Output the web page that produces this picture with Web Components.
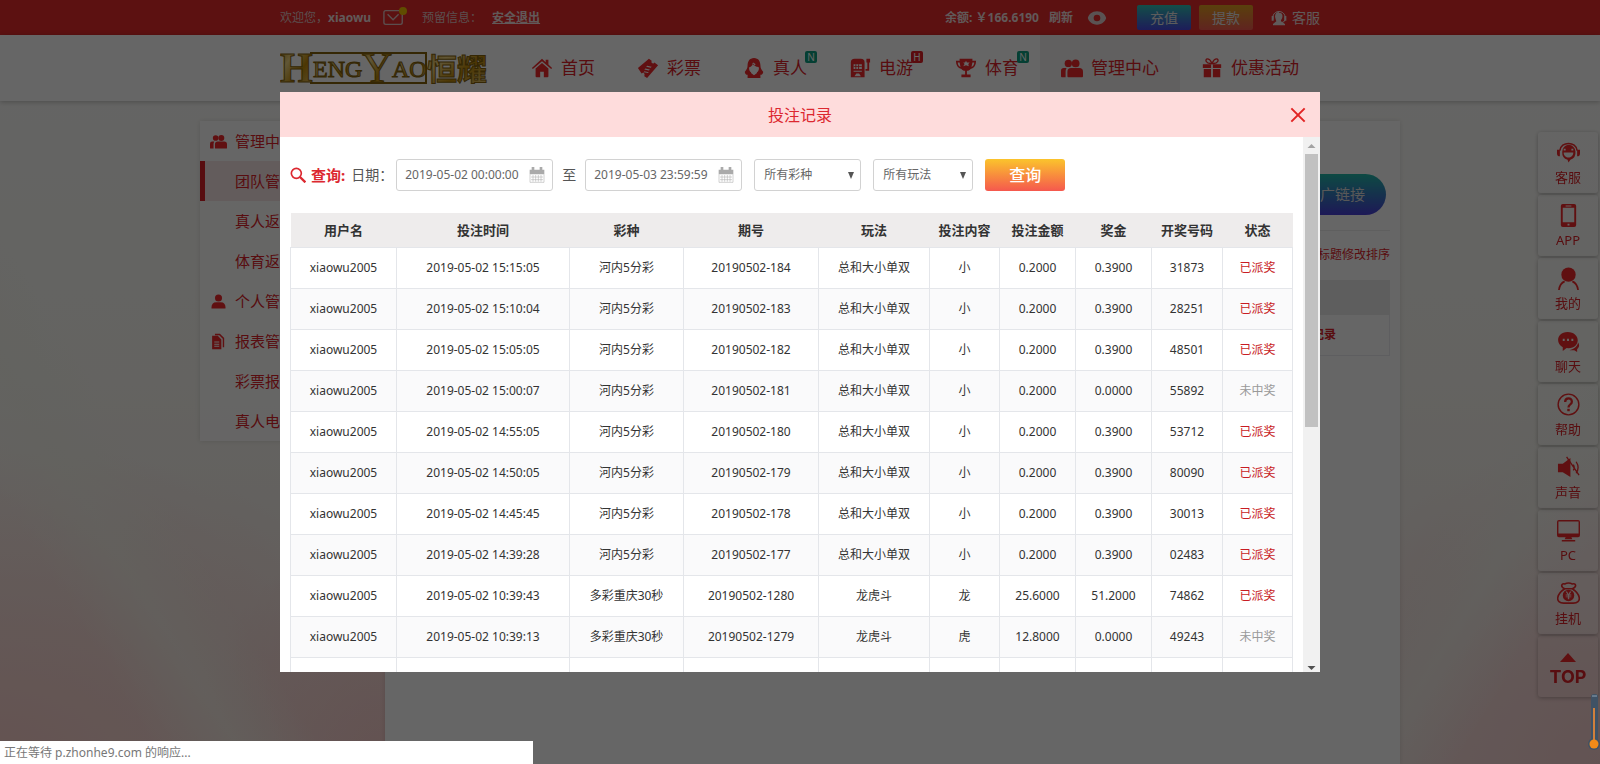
<!DOCTYPE html>
<html lang="zh-CN">
<head>
<meta charset="utf-8">
<title>投注记录</title>
<style>
    html, body {
        margin: 0;
        height: 100%;
        overflow: hidden;
    }

    body {
        --red: #dc2228;
        --icon-red: #f02a2c;
        font-family: "Noto Sans", "Noto Sans CJK SC", sans-serif;
        font-size: 12px;
        line-height: 20px;
        color: #333;
    }
</style>
</head>
<body>
<lottery-page></lottery-page>

<modal-layer>
    <record-dialog heading="投注记录">
        <record-filter></record-filter>
        <record-table></record-table>
    </record-dialog>
</modal-layer>

<status-bubble>正在等待 p.zhonhe9.com 的响应...</status-bubble>
<temp-gauge></temp-gauge>

<script>
const ICONS = {
    home: '<path d="M1 12 12 2l4 3.6V3h3v5.3L23 12l-1 1.2L12 4.500 2 13.200z"/><path d="M5 12.500 12 6.500l7 6V21q0 1-1 1h-4v-6h-4v6H6q-1 0-1-1z"/>',
    ticket: '<path fill-rule="evenodd" d="M1 12 13 2l3 2q-1 3 2 3l1-1 4 3-12 14-3-2q1-3-1-4l-2 1zM11 9.500l-1 1.200 5 1 1-1.200zm-2 3-1 1.200 5 1 1-1.200zm-1 3-.5 1 4.500 1 .8-1z"/>',
    girl: '<path fill-rule="evenodd" d="M12 1c5 0 7 4 7 8 0 3 1 5 3 7 0 3-2 4-5 3l-2-2c2-1 3-4 2-6-3 0-5-2-6-4-1 3-3 4-4 4-1 2 0 5 2 6l-2 2c-3 1-5 0-5-3 2-2 3-4 3-7 0-4 2-8 7-8m-1 5-1 2 2 1 2-1z"/><path d="m5 18 3-1 4 3 4-3 3 1v5H5z"/>',
    slot: '<path fill-rule="evenodd" d="M2 6q0-4 4-4h7q4 0 4 4v16H2zm3 2v5h9V8zm0 7v1h9v-1zm1 6h7l-2-3H8z"/><path d="M5 10h9v1H5zM7 8h1v5H7zm3 0h1v5h-1zM18 15v-2h2V6h-1V2h4v4h-1v9z"/>',
    cup: '<path fill-rule="evenodd" d="M5 2h14v2h4c0 5-2 8-6 9-1 1-2 2-4 2v4h4v3H7v-3h4v-4c-2 0-3-1-4-2-4-1-6-4-6-9h4zm-2 4c0 2 1 4 3 5L5 6zm18 0h-2l-1 5c2-1 3-3 3-5m-9-2-1 2H9l1.500 1.500L9 10l3-1 3 1-.5-2.500L16 6h-3z"/>',
    people: '<circle cx="8" cy="7" r="4"/><circle cx="16" cy="7" r="4.200"/><path d="M0 15q0-3 3-3h3q-1 2-1 4v6H1q-1 0-1-1zM7 16q0-4 4-4h9q4 0 4 4v5q0 1-1 1H8q-1 0-1-1z"/>',
    gift: '<path d="M2 8h9v4H2zm11 0h9v4h-9zM3 13h8v9H3zm10 0h8v9h-8z"/><path d="M12 7C5 8 4 2 7 2c3 0 4 3 5 5 1-2 2-5 5-5 3 0 2 6-5 5" fill="none" stroke="currentColor" stroke-width="1.500"/>',
    user: '<circle cx="12" cy="7" r="5"/><path d="M2 21q0-8 7-8h6q7 0 7 8 0 1-1 1H3q-1 0-1-1"/>',
    files: '<path fill-rule="evenodd" d="M7 1h7l6 6v13h-2V8l-5-5H7zM3 4h8l5 5v14H3zm3 8v1.500h7V12zm0 3v1.500h7V15zm0 3v1.500h7V18z"/>',
    mail: '<g fill="none" stroke="currentColor" stroke-width="1.500"><rect x="1" y="4" width="20" height="15" rx="2"/><path d="m5 8 6 6 6-6"/></g>',
    eye: '<path fill-rule="evenodd" d="M12 4c6 0 10 4 11 8-1 4-5 8-11 8S2 16 1 12c1-4 5-8 11-8m0 4a4 4 0 1 0 0 8 4 4 0 0 0 0-8"/>',
    agent: '<path fill="none" stroke="currentColor" stroke-width="1.500" d="M3 14V9c2-9 16-9 18 0v5q0 4-5 5"/><path d="M12 4c7 0 6 8 3 11v2l6 4v2H3v-2l5-4-1-3-1-4c0-4 2-7 6-7M1 9h3v7H1zm19 0h3v7h-3z"/>',
    search: '<g fill="none" stroke="currentColor"><circle cx="9.500" cy="9.500" r="7.500" stroke-width="2.500"/><path d="m15 15 8 8" stroke-width="3.500"/></g>',
    close: '<path d="M2 2 22 22M22 2 2 22" fill="none" stroke="currentColor" stroke-width="3"/>',
    calendar: '<path d="M1 4h22v7H1zM4 0h4v5H4zm12 0h4v5h-4z"/><g fill="none" stroke="currentColor" stroke-width="1" opacity=".8"><path d="M1.500 11v12h21V11M6 12v10m4-10v10m4-10v10m4-10v10M3 15h18M3 19h18"/></g>',
    headset: '<path fill="none" stroke="currentColor" stroke-width="1.600" d="M3 10C4 0 20 0 21 10"/><path d="M0 9h3v7Q0 16 0 13zm24 0h-3v7q3 0 3-3z"/><path fill-rule="evenodd" d="M12 4a8 8 0 0 1 2 15.500l-2 3-1-3A8 8 0 0 1 12 4M7 12c0 7 10 7 10 0zm0-4v2h2V8zm8 0v2h2V8z"/>',
    phone: '<path fill-rule="evenodd" d="M6 0h12q2 0 2 2v20q0 2-2 2H6q-2 0-2-2V2q0-2 2-2m0 4v15h12V4zm5 16.500v2h2v-2zM9 1.500v1h6v-1z"/>',
    me: '<circle cx="12" cy="8" r="7.500"/><path fill="none" stroke="currentColor" stroke-width="1.800" d="M2 24q1-7 6-9m8 0q5 2 6 9"/>',
    chat: '<path fill-rule="evenodd" d="M11 2c14 0 14 17 1 17l-2-.2L6 22v-4C-2 14 0 2 11 2M6 9v2.500h2V9zm4.500 0v2.500h2V9zM15 9v2.500h2V9z"/><path d="M22 13c2 3 1 5-1 7v3l-3-2h-5c4-1 8-3 9-8"/>',
    help: '<circle cx="12" cy="12" r="10.800" fill="none" stroke="currentColor" stroke-width="1.500"/><path fill="none" stroke="currentColor" stroke-width="2.400" d="M8.500 9.500c0-5 7-5 7-.5 0 3-3.500 3-3.500 6"/><path d="M10.700 16.500h2.600v2.500h-2.600z"/>',
    mute: '<path d="M1 8h5l8-6v20l-8-5H1z"/><path fill="none" stroke="currentColor" stroke-width="1.400" d="M17 9q2 3 0 6m3-9q4 6 0 12M10 1l13 19"/>',
    pc: '<path fill-rule="evenodd" d="M2 1h20q2 0 2 2v14q0 2-2 2H2q-2 0-2-2V3q0-2 2-2m-.5 1.500v12.500h21V2.500zM9 19h6l1 2H8zM5 22h14v1.500H5z"/>',
    bag: '<g fill="none" stroke="currentColor" stroke-width="1.700"><path d="M8 7C3 5 5 1 8 2q4-2 8 0c4-1 5 3 0 5zM8 7c-9 6-10 15-1 15h10c9 0 8-9-1-15"/></g><path fill-rule="evenodd" d="M12 8a6 6 0 1 1 0 12 6 6 0 0 1 0-12m-3 2 2 3H9v1h2.300v1H9v1h2.300v2h1.500v-2H15v-1h-2.200v-1H15v-1h-2l2-3h-1.500L12 12.500 10.500 10z"/>'
};

class UiIcon extends HTMLElement {
    constructor() {
        super();
        this._shadowRoot = this.attachShadow({mode: "open"});
    }

    connectedCallback() {
        this._shadowRoot.innerHTML = `
            <style>
                :host {
                    display: block;
                    flex: none;
                    width: var(--icon-size, 22px);
                    height: var(--icon-size, 22px);
                }
                svg { display: block; width: 100%; height: 100%; fill: currentColor; }
            </style>
            <svg viewBox="0 0 24 24" aria-hidden="true">${ICONS[this.getAttribute("name")]}</svg>
        `;
    }
}

class TopBar extends HTMLElement {
    constructor() {
        super();
        this._shadowRoot = this.attachShadow({mode: "open"});
    }

    connectedCallback() {
        this._shadowRoot.innerHTML = `
            <style>
                :host { display: block; background: #e62b2b; color: #e3c3c3; }
                .inner {
                    max-width: 1040px;
                    height: 35px;
                    margin: 0 auto;
                    display: flex;
                    align-items: center;
                }
                a { color: inherit; }
                b, .out { color: #f3dede; font-weight: bold; }
                .mail { position: relative; margin: 0 17px 0 12px; }
                .mail i {
                    position: absolute;
                    top: 0;
                    right: -2px;
                    width: 8px;
                    height: 8px;
                    border-radius: 50%;
                    background: #f0c000;
                }
                .out { margin-left: 10px; }
                .money { margin-left: auto; }
                .refresh {
                    margin: 0 14px 0 10px;
                    padding: 0;
                    border: 0;
                    background: none;
                    font: bold 12px/20px "Noto Sans", "Noto Sans CJK SC", sans-serif;
                    color: #f3dede;
                }
                .eye { --icon-size: 20px; margin-right: 30px; color: #e0d0d0; }
                .btn {
                    width: 54px;
                    height: 25px;
                    margin-right: 8px;
                    padding: 0;
                    border: 0;
                    border-radius: 2px;
                    font: 14px/25px "Noto Sans", "Noto Sans CJK SC", sans-serif;
                    color: #e6e6e6;
                    background: linear-gradient(#2fc4b4, #4a48e0);
                }
                .cash { background: linear-gradient(#e0a020, #f05a50); }
                .service {
                    display: flex;
                    align-items: center;
                    gap: 5px;
                    margin-left: 10px;
                    font-size: 14px;
                    color: #f0e0e0;
                    text-decoration: none;
                }
                .service ui-icon { --icon-size: 16px; }
            </style>
            <div class="inner">
                <span>欢迎您，<b>xiaowu</b></span>
                <a class="mail" href="#mail" aria-label="mail"><ui-icon name="mail"></ui-icon><i></i></a>
                <span>预留信息：</span>
                <a class="out" href="#logout">安全退出</a>
                <b class="money">余额: ￥166.6190</b>
                <button class="refresh">刷新</button>
                <ui-icon class="eye" name="eye"></ui-icon>
                <button class="btn">充值</button>
                <button class="btn cash">提款</button>
                <a class="service" href="#service"><ui-icon name="agent"></ui-icon>客服</a>
            </div>
        `;
    }
}

class SiteLogo extends HTMLElement {
    constructor() {
        super();
        this._shadowRoot = this.attachShadow({mode: "open"});
    }

    connectedCallback() {
        this._shadowRoot.innerHTML = `
            <style>
                :host { display: block; }
                svg { display: block; }
                text { font-family: "Liberation Serif", serif; stroke: #85630c; stroke-width: 1px; fill: url(#gold); }
                .cjk { font-family: "Noto Sans CJK SC", sans-serif; font-weight: bold; }
                .line { fill: none; stroke: #85630c; stroke-width: 2; }
            </style>
            <svg width="208" height="60" viewBox="0 0 208 60">
                <defs>
                    <linearGradient id="gold" x1="0" y1="0" x2="1" y2="1">
                        <stop offset="0" stop-color="#b07a00"/>
                        <stop offset=".3" stop-color="#f2d888"/>
                        <stop offset=".6" stop-color="#c08a08"/>
                        <stop offset="1" stop-color="#e8d08a"/>
                    </linearGradient>
                </defs>
                <path class="line" d="M30 15H146V45H30"/>
                <text x="0" y="44" font-size="42" font-weight="bold">H</text>
                <text x="33" y="39" font-size="24">ENG</text>
                <text x="82" y="44" font-size="42">Y</text>
                <text x="112" y="39" font-size="24">AO</text>
                <text class="cjk" x="147" y="42" font-size="30">恒耀</text>
            </svg>
        `;
    }
}

class NavItem extends HTMLElement {
    constructor() {
        super();
        this._shadowRoot = this.attachShadow({mode: "open"});
    }

    connectedCallback() {
        const badge = this.getAttribute("badge");
        this._shadowRoot.innerHTML = `
            <style>
                :host { display: block; position: relative; font-size: 17px; color: var(--red); }
                :host([active]) { background: #f2efef; }
                a {
                    display: flex;
                    align-items: center;
                    gap: 8px;
                    height: 66px;
                    padding: 0 21px;
                    color: inherit;
                    text-decoration: none;
                }
                ui-icon { color: var(--icon-red); }
                .badge {
                    position: absolute;
                    top: 16px;
                    right: 11px;
                    width: 12px;
                    height: 12px;
                    border-radius: 2px;
                    background: #0d9f80;
                    font-size: 10px;
                    line-height: 12px;
                    text-align: center;
                    color: #fff;
                }
                .hot { background: #e02026; }
            </style>
            <a href="#nav"><ui-icon name="${this.getAttribute("icon")}"></ui-icon><slot></slot></a>
            ${badge ? `<span class="badge ${badge === "H" ? "hot" : ""}">${badge}</span>` : ""}
        `;
    }
}

class SiteHeader extends HTMLElement {
    constructor() {
        super();
        this._shadowRoot = this.attachShadow({mode: "open"});
    }

    connectedCallback() {
        this._shadowRoot.innerHTML = `
            <style>
                :host {
                    display: block;
                    background: #fff;
                    box-shadow: 0 1px 5px rgba(0, 0, 0, .25);
                }
                .inner {
                    max-width: 1040px;
                    margin: 0 auto;
                    display: flex;
                    align-items: center;
                    justify-content: space-between;
                }
                nav { display: flex; }
            </style>
            <div class="inner">
                <site-logo></site-logo>
                <nav>
                    <nav-item icon="home">首页</nav-item>
                    <nav-item icon="ticket">彩票</nav-item>
                    <nav-item icon="girl" badge="N">真人</nav-item>
                    <nav-item icon="slot" badge="H">电游</nav-item>
                    <nav-item icon="cup" badge="N">体育</nav-item>
                    <nav-item icon="people" active>管理中心</nav-item>
                    <nav-item icon="gift">优惠活动</nav-item>
                </nav>
            </div>
        `;
    }
}

class SideMenu extends HTMLElement {
    constructor() {
        super();
        this._shadowRoot = this.attachShadow({mode: "open"});
    }

    connectedCallback() {
        const items = [
            ["管理中", "people"],
            ["团队管", "", "active"],
            ["真人返"],
            ["体育返"],
            ["个人管", "user"],
            ["报表管", "files"],
            ["彩票报"],
            ["真人电"]
        ];
        this._shadowRoot.innerHTML = `
            <style>
                :host {
                    display: block;
                    background: rgba(255, 255, 255, .8);
                    box-shadow: 0 0 5px rgba(0, 0, 0, .12);
                    --icon-size: 17px;
                }
                a {
                    display: grid;
                    grid-template-columns: 17px 1fr;
                    column-gap: 8px;
                    align-items: center;
                    height: 40px;
                    padding-left: 10px;
                    font-size: 15px;
                    color: var(--red);
                    text-decoration: none;
                }
                ui-icon { color: var(--icon-red); }
                .active { background: #f8e6e6; box-shadow: inset 5px 0 #dc2228; }
            </style>
            ${items.map(([text, icon, cls]) => `
                <a href="#menu" class="${cls || ""}">
                    ${icon ? `<ui-icon name="${icon}"></ui-icon>` : "<span></span>"}
                    <span>${text}</span>
                </a>`).join("")}
        `;
    }
}

class TeamPanel extends HTMLElement {
    constructor() {
        super();
        this._shadowRoot = this.attachShadow({mode: "open"});
    }

    connectedCallback() {
        this._shadowRoot.innerHTML = `
            <style>
                :host {
                    display: flex;
                    flex-direction: column;
                    align-items: flex-end;
                    box-sizing: border-box;
                    padding: 53px 10px 0;
                    background: #fff;
                    box-shadow: 0 0 5px rgba(0, 0, 0, .12);
                }
                .link {
                    width: 130px;
                    height: 41px;
                    margin-right: 4px;
                    padding: 0 21px;
                    border: 0;
                    border-radius: 21px;
                    background: linear-gradient(#22b8a8, #4a3fd8);
                    font: 15px/41px "Noto Sans", "Noto Sans CJK SC", sans-serif;
                    text-align: right;
                    color: #ddd;
                }
                .sort {
                    align-self: stretch;
                    margin-top: 15px;
                    padding: 14px 0 15px;
                    border-top: 1px solid #eee;
                    text-align: right;
                    color: var(--red);
                }
                .head { align-self: stretch; height: 35px; background: #eceaea; }
                .row {
                    align-self: stretch;
                    padding: 10px 53px 10px 0;
                    border: 1px solid #eaeaf0;
                    border-top: 0;
                    font-weight: bold;
                    text-align: right;
                    color: var(--red);
                }
            </style>
            <button class="link">广链接</button>
            <div class="sort">标题修改排序</div>
            <div class="head"></div>
            <div class="row">记录</div>
        `;
    }
}

class ToolItem extends HTMLElement {
    constructor() {
        super();
        this._shadowRoot = this.attachShadow({mode: "open"});
    }

    connectedCallback() {
        this._shadowRoot.innerHTML = `
            <style>
                :host {
                    display: block;
                    --icon-size: 23px;
                    background: rgba(255, 255, 255, .25);
                    border-radius: 3px;
                    box-shadow: 0 1px 4px rgba(0, 0, 0, .28);
                }
                a {
                    box-sizing: border-box;
                    display: flex;
                    flex-direction: column;
                    align-items: center;
                    justify-content: center;
                    gap: 3px;
                    width: 60px;
                    height: 61px;
                    padding-top: 3px;
                    font-size: 13px;
                    color: var(--red);
                    text-decoration: none;
                }
                ui-icon, svg { color: var(--icon-red); }
                :host([top]) { background: none; }
                :host([top]) a {
                    padding-top: 8px;
                    font: bold 18px/24px Inter, sans-serif;
                }
            </style>
            <a href="#tool">
                ${this.hasAttribute("top")
                    ? `<svg width="16" height="9" viewBox="0 0 16 9" fill="currentColor"><path d="M8 0 16 9H0z"/></svg>`
                    : `<ui-icon name="${this.getAttribute("icon")}"></ui-icon>`}
                <span><slot></slot></span>
            </a>
        `;
    }
}

class ToolRail extends HTMLElement {
    constructor() {
        super();
        this._shadowRoot = this.attachShadow({mode: "open"});
    }

    connectedCallback() {
        this._shadowRoot.innerHTML = `
            <style>
                /* floats over the page, pinned to the right edge */
                :host {
                    position: fixed;
                    top: 132px;
                    right: 2px;
                    display: flex;
                    flex-direction: column;
                    gap: 2px;
                }
            </style>
            <tool-item icon="headset">客服</tool-item>
            <tool-item icon="phone">APP</tool-item>
            <tool-item icon="me">我的</tool-item>
            <tool-item icon="chat">聊天</tool-item>
            <tool-item icon="help">帮助</tool-item>
            <tool-item icon="mute">声音</tool-item>
            <tool-item icon="pc">PC</tool-item>
            <tool-item icon="bag">挂机</tool-item>
            <tool-item top>TOP</tool-item>
        `;
    }
}

class LotteryPage extends HTMLElement {
    constructor() {
        super();
        this._shadowRoot = this.attachShadow({mode: "open"});
    }

    connectedCallback() {
        this._shadowRoot.innerHTML = `
            <style>
                :host {
                    display: flex;
                    flex-direction: column;
                    height: 100%;
                    background:
                        linear-gradient(58deg, transparent 8%, rgba(246, 246, 236, .6) 12%, transparent 16%),
                        linear-gradient(-58deg, transparent 7%, rgba(244, 246, 238, .6) 11%, transparent 15%),
                        radial-gradient(ellipse 28% 42% at 0 100%, #fad0cc, transparent),
                        radial-gradient(ellipse 12% 30% at 24% 100%, #f8cccb, transparent),
                        radial-gradient(ellipse 20% 42% at 100% 100%, #f8d0d0, transparent),
                        linear-gradient(#fcfcfb, #f9f8f2 50%, #f6e6e2);
                }
                main {
                    flex: 1;
                    box-sizing: border-box;
                    width: 100%;
                    max-width: 1200px;
                    margin: 0 auto;
                    padding-top: 20px;
                    display: grid;
                    grid-template-columns: 175px 1fr;
                    gap: 10px;
                }
                side-menu { align-self: start; }
                site-header { position: relative; }
            </style>
            <top-bar></top-bar>
            <site-header></site-header>
            <main>
                <side-menu></side-menu>
                <team-panel></team-panel>
            </main>
            <tool-rail></tool-rail>
        `;
    }
}

class ModalLayer extends HTMLElement {
    constructor() {
        super();
        this._shadowRoot = this.attachShadow({mode: "open"});
    }

    connectedCallback() {
        this._shadowRoot.innerHTML = `
            <style>
                :host {
                    position: fixed;
                    inset: 0;
                    display: flex;
                    align-items: center;
                    justify-content: center;
                    background: rgba(0, 0, 0, .6);
                }
            </style>
            <slot></slot>
        `;
    }
}

class ScrollTrack extends HTMLElement {
    constructor() {
        super();
        this._shadowRoot = this.attachShadow({mode: "open"});
    }

    connectedCallback() {
        this._shadowRoot.innerHTML = `
            <style>
                :host {
                    display: flex;
                    flex-direction: column;
                    flex: none;
                    width: 17px;
                    background: #f1f1f1;
                }
                svg { flex: none; display: block; }
                .thumb { flex: 6; margin: 0 2px; background: #c1c1c1; }
                .rest { flex: 5; }
            </style>
            <svg width="17" height="17"><path d="M4.500 11h8l-4-4z" fill="#a3a3a3"/></svg>
            <div class="thumb"></div>
            <div class="rest"></div>
            <svg width="17" height="17"><path d="M4.500 11h8l-4 4z" fill="#505050"/></svg>
        `;
    }
}

class RecordDialog extends HTMLElement {
    constructor() {
        super();
        this._shadowRoot = this.attachShadow({mode: "open"});
    }

    connectedCallback() {
        this._shadowRoot.innerHTML = `
            <style>
                :host {
                    display: flex;
                    flex-direction: column;
                    width: min(1040px, 100%);
                    height: min(580px, 100%);
                    background: #fff;
                }
                header {
                    display: grid;
                    grid-template-columns: 1fr auto 1fr;
                    align-items: center;
                    height: 45px;
                    flex: none;
                    background: #fedcdc;
                    color: #dc2830;
                }
                h2 {
                    grid-column: 2;
                    margin: 0;
                    font-size: 16px;
                    font-weight: normal;
                }
                button {
                    justify-self: end;
                    margin-right: 14px;
                    padding: 0;
                    border: 0;
                    background: none;
                    color: #e22424;
                    --icon-size: 16px;
                }
                .body { flex: 1; display: flex; min-height: 0; }
                .content {
                    flex: 1;
                    display: flex;
                    flex-direction: column;
                    gap: 22px;
                    padding: 22px 11px 0 10px;
                    overflow: hidden;
                }
            </style>
            <header>
                <h2>${this.getAttribute("heading")}</h2>
                <button aria-label="close"><ui-icon name="close"></ui-icon></button>
            </header>
            <div class="body">
                <div class="content"><slot></slot></div>
                <scroll-track></scroll-track>
            </div>
        `;
    }
}

class RecordFilter extends HTMLElement {
    constructor() {
        super();
        this._shadowRoot = this.attachShadow({mode: "open"});
    }

    connectedCallback() {
        this._shadowRoot.innerHTML = `
            <style>
                :host {
                    display: flex;
                    align-items: center;
                    gap: 12px;
                    flex: none;
                    color: #555;
                }
                .title, .range, .date { display: flex; align-items: center; }
                .title { gap: 5px; font-size: 15px; color: #dc2830; --icon-size: 16px; }
                .range { gap: 9px; margin-left: -6px; font-size: 14px; }
                .from { margin-right: -6px; }
                .date, .pick {
                    box-sizing: border-box;
                    height: 32px;
                    border: 1px solid #d2d2d2;
                    border-radius: 3px;
                    background: #fff;
                }
                .date { width: 157px; padding: 0 7px 0 8px; color: #aaa; --icon-size: 16px; }
                input, select {
                    min-width: 0;
                    padding: 0;
                    border: 0;
                    outline: 0;
                    background: none;
                    font: 12px/30px "Noto Sans", "Noto Sans CJK SC", sans-serif;
                    color: #666;
                }
                input { flex: 1; }
                .pick { display: grid; align-items: center; width: 107px; }
                .play { width: 100px; }
                select {
                    grid-area: 1 / 1;
                    height: 30px;
                    padding-left: 9px;
                    appearance: none;
                }
                .pick svg { grid-area: 1 / 1; justify-self: end; margin-right: 6px; pointer-events: none; }
                .query {
                    width: 80px;
                    height: 32px;
                    padding: 0;
                    border: 0;
                    border-radius: 3px;
                    background: linear-gradient(#fbc42c, #f5584e);
                    font: 500 16px/32px "Noto Sans", "Noto Sans CJK SC", sans-serif;
                    color: #fff;
                }
            </style>
            <div class="title"><ui-icon name="search"></ui-icon><b>查询:</b></div>
            <div class="range">
                <label class="from" for="from">日期：</label>
                <span class="date"><input id="from" value="2019-05-02 00:00:00"><ui-icon name="calendar"></ui-icon></span>
                <label for="to">至</label>
                <span class="date"><input id="to" value="2019-05-03 23:59:59"><ui-icon name="calendar"></ui-icon></span>
            </div>
            <span class="pick">
                <select aria-label="彩种"><option>所有彩种</option></select>
                <svg width="6" height="7"><path d="M0 0h6L3 7z" fill="#555"/></svg>
            </span>
            <span class="pick play">
                <select aria-label="玩法"><option>所有玩法</option></select>
                <svg width="6" height="7"><path d="M0 0h6L3 7z" fill="#555"/></svg>
            </span>
            <button class="query">查询</button>
        `;
    }
}

class RecordTable extends HTMLElement {
    constructor() {
        super();
        this._shadowRoot = this.attachShadow({mode: "open"});
    }

    connectedCallback() {
        const heads = ["用户名", "投注时间", "彩种", "期号", "玩法", "投注内容", "投注金额", "奖金", "开奖号码", "状态"];
        const widths = [106, 173, 114, 135, 111, 70, 76, 76, 71, 70];
        const hn = "河内5分彩", cq = "多彩重庆30秒", zh = "总和大小单双", lh = "龙虎斗";
        const rows = [
            ["15:15:05", hn, "184", zh, "小", "0.2000", "0.3900", "31873"],
            ["15:10:04", hn, "183", zh, "小", "0.2000", "0.3900", "28251"],
            ["15:05:05", hn, "182", zh, "小", "0.2000", "0.3900", "48501"],
            ["15:00:07", hn, "181", zh, "小", "0.2000", "0.0000", "55892"],
            ["14:55:05", hn, "180", zh, "小", "0.2000", "0.3900", "53712"],
            ["14:50:05", hn, "179", zh, "小", "0.2000", "0.3900", "80090"],
            ["14:45:45", hn, "178", zh, "小", "0.2000", "0.3900", "30013"],
            ["14:39:28", hn, "177", zh, "小", "0.2000", "0.3900", "02483"],
            ["10:39:43", cq, "1280", lh, "龙", "25.6000", "51.2000", "74862"],
            ["10:39:13", cq, "1279", lh, "虎", "12.8000", "0.0000", "49243"]
        ];

        const body = rows.map(([time, game, no, play, pick, bet, win, code]) => {
            const lost = win === "0.0000";
            const cells = ["xiaowu2005", "2019-05-02 " + time, game, "20190502-" + no, play, pick, bet, win, code];
            return `<tr>${cells.map(c => `<td>${c}</td>`).join("")}
                <td class="${lost ? "lost" : "paid"}">${lost ? "未中奖" : "已派奖"}</td></tr>`;
        }).join("");

        this._shadowRoot.innerHTML = `
            <style>
                :host { display: block; flex: none; }
                table {
                    width: 100%;
                    table-layout: fixed;
                    border-collapse: collapse;
                    text-align: center;
                }
                th {
                    height: 34px;
                    padding: 0;
                    background: #eeecec;
                    font-size: 13px;
                    font-weight: bold;
                    color: #333;
                }
                td {
                    box-sizing: border-box;
                    height: 41px;
                    padding: 0;
                    border: 1px solid #e4e6ea;
                    color: #333;
                }
                tbody tr:nth-child(even) { background: #fafafb; }
                .paid { color: #c81c24; }
                .lost { color: #999; }
            </style>
            <table>
                <colgroup>${widths.map(w => `<col style="width: ${w}px">`).join("")}</colgroup>
                <thead><tr>${heads.map(h => `<th>${h}</th>`).join("")}</tr></thead>
                <tbody>${body}<tr>${"<td></td>".repeat(10)}</tr></tbody>
            </table>
        `;
    }
}

class StatusBubble extends HTMLElement {
    constructor() {
        super();
        this._shadowRoot = this.attachShadow({mode: "open"});
    }

    connectedCallback() {
        this._shadowRoot.innerHTML = `
            <style>
                :host {
                    position: fixed;
                    left: 0;
                    bottom: 0;
                    box-sizing: border-box;
                    width: calc(100% / 3);
                    height: 23px;
                    padding: 0 4px;
                    background: #fff;
                    line-height: 23px;
                    color: #777;
                }
            </style>
            <slot></slot>
        `;
    }
}

class TempGauge extends HTMLElement {
    constructor() {
        super();
        this._shadowRoot = this.attachShadow({mode: "open"});
    }

    connectedCallback() {
        this._shadowRoot.innerHTML = `
            <style>
                :host { position: fixed; right: 0; bottom: 12px; }
                svg { display: block; }
            </style>
            <svg width="12" height="58" viewBox="0 0 12 58">
                <rect x="3" y="0" width="7" height="52" rx="3" fill="#3f5265"/>
                <circle cx="6" cy="50" r="6" fill="#3f5265"/>
                <path d="M4 2h5" stroke="#8fa3b5" stroke-width="1"/>
                <path d="M6 14v34" stroke="#d0803c" stroke-width="2"/>
                <circle cx="6" cy="50" r="4.500" fill="#f08a18"/>
            </svg>
        `;
    }
}

customElements.define("ui-icon", UiIcon);
customElements.define("top-bar", TopBar);
customElements.define("site-logo", SiteLogo);
customElements.define("nav-item", NavItem);
customElements.define("site-header", SiteHeader);
customElements.define("side-menu", SideMenu);
customElements.define("team-panel", TeamPanel);
customElements.define("tool-item", ToolItem);
customElements.define("tool-rail", ToolRail);
customElements.define("lottery-page", LotteryPage);
customElements.define("modal-layer", ModalLayer);
customElements.define("scroll-track", ScrollTrack);
customElements.define("record-dialog", RecordDialog);
customElements.define("record-filter", RecordFilter);
customElements.define("record-table", RecordTable);
customElements.define("status-bubble", StatusBubble);
customElements.define("temp-gauge", TempGauge);
</script>
</body>
</html>
